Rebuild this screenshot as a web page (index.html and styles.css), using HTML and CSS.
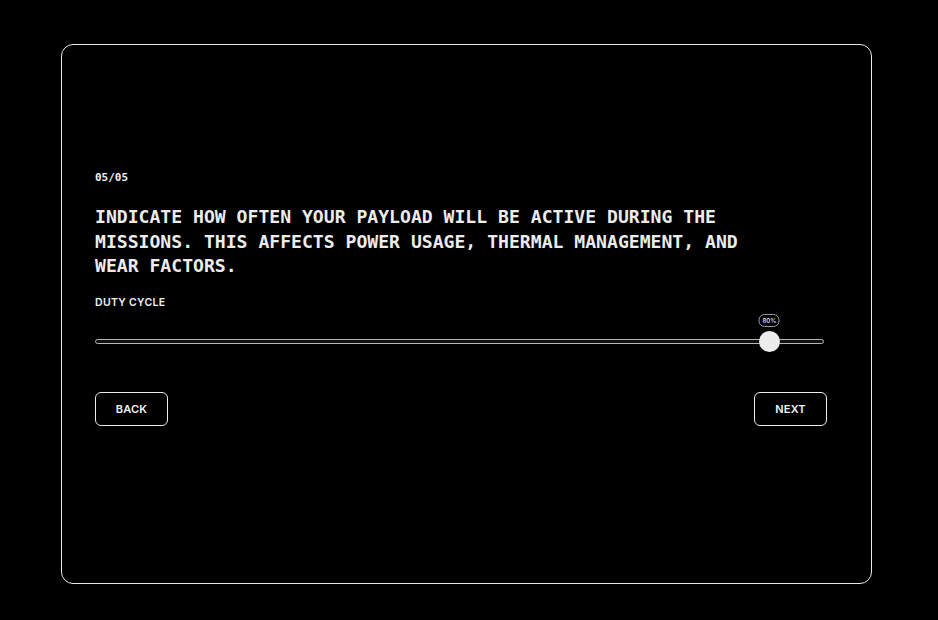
FILE: index.html
```html
<!DOCTYPE html>
<html lang="en">
<head>
<meta charset="utf-8">
<title>Duty cycle</title>
<link rel="stylesheet" href="styles.css">
</head>
<body>
<main class="frame">
  <section class="card">
    <div class="content">
      <div class="step">05/05</div>
      <h1 class="question">INDICATE HOW OFTEN YOUR PAYLOAD WILL BE ACTIVE DURING THE MISSIONS. THIS AFFECTS POWER USAGE, THERMAL MANAGEMENT, AND WEAR FACTORS.</h1>
      <div class="label">DUTY CYCLE</div>
      <div class="slider">
        <div class="track"></div>
        <div class="thumb" style="left: 92.5%">
          <span class="badge">80%</span>
        </div>
      </div>
      <div class="actions">
        <button class="btn">BACK</button>
        <button class="btn">NEXT</button>
      </div>
    </div>
  </section>
</main>
</body>
</html>
```

FILE: styles.css
```css
* { box-sizing: border-box; }
html, body {
  margin: 0;
  padding: 0;
  background: #000;
  width: 938px;
  height: 620px;
  overflow: hidden;
}
.frame {
  padding: 44px 67px 36px 61px;
  height: 620px;
}
.card {
  width: 811px;
  height: 540px;
  border: 1.5px solid #e8e8e8;
  border-radius: 12px;
  padding: 126px 0 0 33px;
}
.content {
  width: 732px;
  color: #f0f0f0;
}
.step {
  font-family: "DejaVu Sans Mono", "Liberation Mono", monospace;
  font-weight: bold;
  font-size: 11px;
  line-height: 14px;
  height: 14px;
}
.question {
  margin: 20px 0 0 0;
  font-family: "DejaVu Sans Mono", "Liberation Mono", monospace;
  font-weight: bold;
  font-size: 18.1px;
  line-height: 24.5px;
  width: 690px;
  color: #ececec;
}
.label {
  margin-top: 17px;
  font-family: Inter, "Liberation Sans", sans-serif;
  font-weight: 600;
  font-size: 10.5px;
  letter-spacing: 0.3px;
  line-height: 14px;
}
.slider {
  position: relative;
  margin-top: 29px;
  width: 729px;
  height: 6px;
}
.track {
  height: 5px;
  border: 1px solid #b5b5b5;
  border-radius: 3px;
  background: #111;
}
.thumb {
  position: absolute;
  top: -8px;
  width: 21px;
  height: 21px;
  margin-left: -10.5px;
  border-radius: 50%;
  background: #ececec;
}
.badge {
  position: absolute;
  left: 50%;
  bottom: 25px;
  transform: translateX(-50%);
  width: 21px;
  height: 13px;
  border: 1px solid #9a9a9a;
  border-radius: 6px;
  background: #000;
  color: #ddd;
  font-family: Inter, "Liberation Sans", sans-serif;
  font-size: 6px;
  font-weight: 600;
  line-height: 11px;
  text-align: center;
}
.actions {
  display: flex;
  justify-content: space-between;
  margin-top: 47px;
}
.btn {
  width: 73px;
  height: 34px;
  background: #000;
  border: 1.5px solid #ececec;
  border-radius: 6px;
  color: #f2f2f2;
  font-family: Inter, "Liberation Sans", sans-serif;
  font-weight: 600;
  font-size: 11px;
  letter-spacing: 0.2px;
  padding: 0;
}
```
